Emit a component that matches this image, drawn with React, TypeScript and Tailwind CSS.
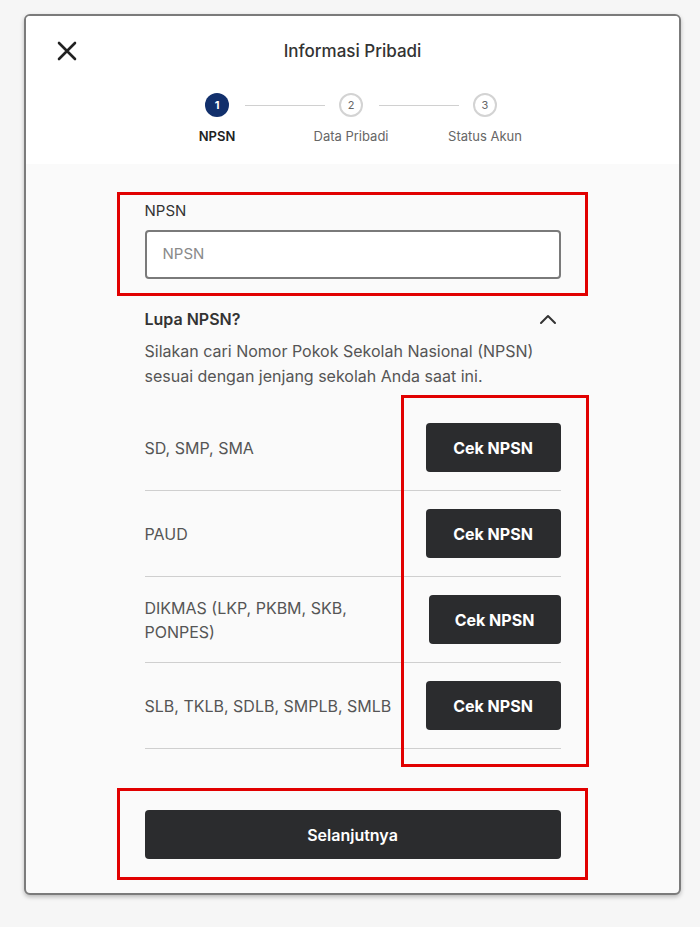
import React from "react";

const rows = [
  { label: "SD, SMP, SMA", w: "w-[135px]" },
  { label: "PAUD", w: "w-[135px]" },
  { label: "DIKMAS (LKP, PKBM, SKB, PONPES)", w: "w-[132px]" },
  { label: "SLB, TKLB, SDLB, SMPLB, SMLB", w: "w-[135px]" },
];

export default function App() {
  return (
    <div
      className="relative min-h-[927px] w-[700px] bg-[#f6f6f6] pt-[14px]"
      style={{ fontFamily: "Inter, 'Noto Sans', sans-serif" }}
    >
      <div className="ml-[24px] w-[657px] overflow-hidden rounded-[6px] border-2 border-[#7b7b7b] bg-[#fafafa] shadow-[0_2px_4px_rgba(0,0,0,0.25)]">
        {/* Header */}
        <div className="h-[148px] bg-white">
          <div className="grid grid-cols-[60px_1fr_60px] items-center px-[31px] pt-[23px]">
            <svg width="20" height="20" viewBox="0 0 20 20" className="text-[#222]">
              <path d="M2 2 L18 18 M18 2 L2 18" stroke="currentColor" strokeWidth="2.6" strokeLinecap="round" />
            </svg>
            <div className="text-center text-[17px] leading-[24px] font-medium text-[#333]">Informasi Pribadi</div>
            <div />
          </div>
          <div className="mt-[30px] flex items-center pl-[179px]">
            <div className="flex h-[24px] w-[24px] items-center justify-center rounded-full bg-[#12306c] text-[11px] font-bold text-white">1</div>
            <div className="ml-[16px] mr-[14px] h-[1px] w-[80px] bg-[#d0d0d0]" />
            <div className="flex h-[24px] w-[24px] items-center justify-center rounded-full border-2 border-[#d3d3d3] bg-white text-[11px] text-[#666]">2</div>
            <div className="ml-[16px] mr-[14px] h-[1px] w-[80px] bg-[#d0d0d0]" />
            <div className="flex h-[24px] w-[24px] items-center justify-center rounded-full border-2 border-[#d3d3d3] bg-white text-[11px] text-[#666]">3</div>
          </div>
          <div className="mt-[11px] flex items-center pl-[179px] text-[13px] leading-[16px]">
            <div className="flex w-[24px] justify-center whitespace-nowrap font-semibold text-[#222]">NPSN</div>
            <div className="w-[110px]" />
            <div className="flex w-[24px] justify-center whitespace-nowrap text-[#666]">Data Pribadi</div>
            <div className="w-[110px]" />
            <div className="flex w-[24px] justify-center whitespace-nowrap text-[#666]">Status Akun</div>
          </div>
        </div>

        {/* Body */}
        <div className="mx-auto w-[416px] pt-[37px] pb-[34px]">
          <div className="text-[15px] leading-[20px] text-[#333]">NPSN</div>
          <div className="mt-[9px] flex h-[49px] items-center rounded-[4px] border-2 border-[#7a7a7a] bg-white px-[16px] text-[15px] text-[#8a8a8a]">
            NPSN
          </div>

          <div className="mt-[28px] flex items-center justify-between">
            <div className="text-[16px] leading-[24px] font-semibold text-[#333]">Lupa NPSN?</div>
            <svg width="18" height="12" viewBox="0 0 18 12" className="mr-[4px] text-[#333]">
              <path d="M2 10 L9 3 L16 10" stroke="currentColor" strokeWidth="2" fill="none" strokeLinecap="round" strokeLinejoin="round" />
            </svg>
          </div>
          <p className="mt-[8px] text-[16px] leading-[25px] text-[#555]">
            Silakan cari Nomor Pokok Sekolah Nasional (NPSN) sesuai dengan jenjang sekolah Anda saat ini.
          </p>

          <div className="mt-[16px]">
            {rows.map((r) => (
              <div key={r.label} className="flex items-center justify-between border-b border-[#cfcfcf] py-[18px]">
                <div className="max-w-[250px] text-[16px] leading-[24px] text-[#555]">{r.label}</div>
                <button className={`h-[49px] ${r.w} rounded-[4px] bg-[#2b2c2e] text-[16px] font-bold text-white`}>
                  Cek NPSN
                </button>
              </div>
            ))}
          </div>

          <button className="mt-[61px] h-[49px] w-full rounded-[4px] bg-[#2b2c2e] text-[16px] font-semibold text-white">
            Selanjutnya
          </button>
        </div>
      </div>

      {/* Annotation boxes */}
      <div className="pointer-events-none absolute left-[117px] top-[192px] h-[104px] w-[471px] border-[3px] border-[#e10000]" />
      <div className="pointer-events-none absolute left-[401px] top-[395px] h-[372px] w-[188px] border-[3px] border-[#e10000]" />
      <div className="pointer-events-none absolute left-[117px] top-[788px] h-[92px] w-[471px] border-[3px] border-[#e10000]" />
    </div>
  );
}
